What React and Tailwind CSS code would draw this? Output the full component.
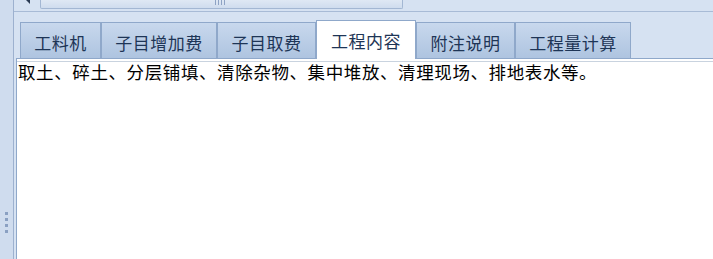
const TABS = [
  { label: '工料机', w: 'w-[81px]' },
  { label: '子目增加费', w: 'w-[116px]' },
  { label: '子目取费', w: 'w-[99px]' },
  { label: '工程内容', w: 'w-[100px]', active: true },
  { label: '附注说明', w: 'w-[99px]' },
  { label: '工程量计算', w: 'w-[116px]' },
]

function Tab({ label, w, active }) {
  if (active) {
    return (
      <div className={`${w} h-[39px] -mb-px relative z-10 flex items-center justify-center pt-[1px] bg-white border border-b-0 border-[#8fa8ca] text-[#1e3556]`}>
        {label}
      </div>
    )
  }
  return (
    <div className={`${w} h-[36px] flex items-center justify-center pt-[3px] bg-gradient-to-b from-[#c8d8ed] to-[#aec4e0] border border-b-0 border-[#8fa8ca] text-[#1e3556]`}>
      {label}
    </div>
  )
}

export default function App() {
  return (
    <div className="w-[713px] h-[259px] flex overflow-hidden bg-[#d6e2f2] font-['Noto_Sans_CJK_SC','Noto_Sans',sans-serif] text-[17.5px] leading-none">
      {/* splitter */}
      <div className="w-[14px] shrink-0 bg-[#cfdcee] border-r border-[#9db1cf] flex flex-col items-center pt-[212px] gap-[3px] pr-[1px]">
        {[0, 1, 2, 3].map((i) => (
          <div key={i} className="w-[3px] h-[3px] bg-[#8aa0c2]" />
        ))}
      </div>

      <div className="flex-1 flex flex-col">
        {/* horizontal scrollbar (cut off at top) */}
        <div className="h-[12px] shrink-0 flex items-start border-b border-[#a8bbd6]">
          <div className="w-[26px] h-[8px] flex justify-center">
            <div className="ml-[2px] w-0 h-0 border-t-[4px] border-t-[#2a3a52] border-l-[4px] border-l-transparent" />
          </div>
          <div className="w-[363px] h-[9px] bg-gradient-to-b from-[#dfe8f4] to-[#cfdcee] border border-t-0 border-[#a3b7d3] rounded-b-[2px] flex justify-center">
            <div className="flex gap-[2px] h-[5px] ml-[-4px]">
              <div className="w-px bg-[#8ea3c4]" />
              <div className="w-px bg-[#8ea3c4]" />
              <div className="w-px bg-[#8ea3c4]" />
              <div className="w-px bg-[#8ea3c4]" />
            </div>
          </div>
        </div>

        {/* tab strip */}
        <div className="h-[46px] shrink-0 flex items-end pl-[6px] text-[17px] tracking-[0.5px]">
          {TABS.map((t) => (
            <Tab key={t.label} {...t} />
          ))}
        </div>

        {/* content */}
        <div className="flex-1 ml-[2px] bg-white border-t border-l border-[#8fa8ca] pt-[2px] flex flex-col">
          <div className="flex-1 border-t border-[#c9d3df] pl-[1px] pt-[1px] text-black tracking-[0.6px]">
            取土、碎土、分层铺填、清除杂物、集中堆放、清理现场、排地表水等。
          </div>
        </div>
      </div>
    </div>
  )
}
